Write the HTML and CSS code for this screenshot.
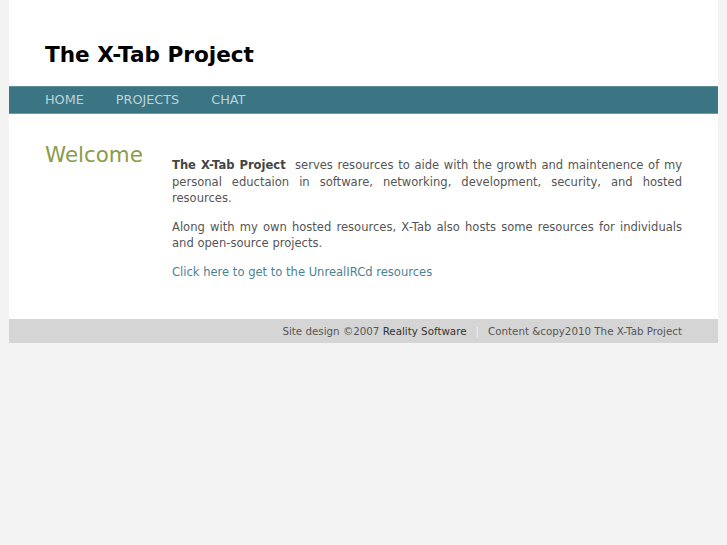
FILE: index.html
```html
<!DOCTYPE html>
<html>
<head>
<meta charset="utf-8">
<title>The X-Tab Project</title>
<link rel="stylesheet" href="styles.css">
</head>
<body>
<div class="page">
  <header class="header">
    <h1 class="site-title">The X-Tab Project</h1>
  </header>
  <nav class="nav">
    <a href="#" class="nav-item">HOME</a>
    <a href="#" class="nav-item">PROJECTS</a>
    <a href="#" class="nav-item">CHAT</a>
  </nav>
  <main class="content">
    <div class="side">
      <h2 class="welcome">Welcome</h2>
    </div>
    <div class="main">
      <p class="para"><strong>The X-Tab Project</strong>&nbsp; serves resources to aide with the growth and maintenence of my personal eductaion in software, networking, development, security, and hosted resources.</p>
      <p class="para">Along with my own hosted resources, X-Tab also hosts some resources for individuals and open-source projects.</p>
      <p class="para"><a href="#" class="link">Click here to get to the UnrealIRCd resources</a></p>
    </div>
  </main>
  <footer class="footer">
    <span>Site design ©2007 <span class="strong">Reality Software</span></span>
    <span class="sep">|</span>
    <span>Content &amp;copy2010 The X-Tab Project</span>
  </footer>
</div>
</body>
</html>
```

FILE: styles.css
```css
html, body {
  margin: 0;
  padding: 0;
  background: #f3f3f3;
  font-family: "DejaVu Sans", sans-serif;
}
.page {
  width: 709px;
  margin: 0 auto;
  background: #ffffff;
}
.header {
  padding: 41px 36px 17px;
}
.site-title {
  margin: 0;
  font-size: 21.6px;
  line-height: 28px;
  font-weight: bold;
  color: #000;
}
.nav {
  display: flex;
  gap: 32px;
  height: 26px;
  align-items: center;
  padding: 0 36px;
  background: #3b7584;
  border-top: 1px solid #5f8f9c;
  border-bottom: 1px solid #6c9aa6;
}
.nav-item {
  color: #bcd3da;
  text-decoration: none;
  font-size: 12.8px;
  line-height: 26px;
}
.content {
  display: flex;
  padding: 28px 36px 39px;
}
.side {
  width: 127px;
  flex: none;
}
.welcome {
  margin: 0;
  font-size: 21.4px;
  font-weight: normal;
  line-height: 26px;
  color: #8a9b4a;
}
.main {
  width: 510px;
  padding-top: 15px;
}
.para {
  margin: 0 0 12px;
  font-size: 11.55px;
  line-height: 16.5px;
  color: #555;
  text-align: justify;
}
.para:last-child {
  margin-bottom: 0;
}
.para strong {
  color: #444;
}
.link {
  color: #4a8295;
  text-decoration: none;
}
.footer {
  display: flex;
  justify-content: flex-end;
  align-items: center;
  gap: 7px;
  height: 24px;
  padding: 0 36px;
  background: #d5d5d5;
  font-size: 10.3px;
  color: #555;
}
.footer .strong {
  color: #333;
}
.sep {
  color: #f0f0f0;
  margin: 0 2px;
}
```
